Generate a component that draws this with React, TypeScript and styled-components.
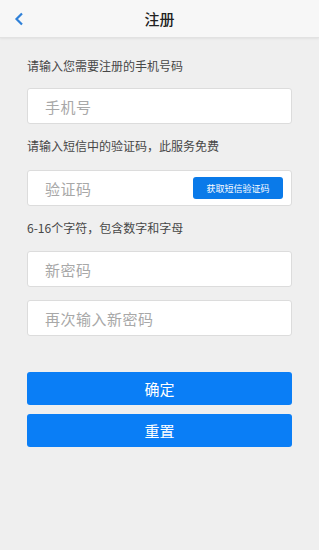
import styled, { createGlobalStyle } from 'styled-components'

const GlobalStyle = createGlobalStyle`
  html, body {
    margin: 0;
    padding: 0;
    background: #efefef;
    font-family: "Noto Sans CJK SC", "Noto Sans", sans-serif;
  }
`

const Page = styled.div`
  width: 319px;
  min-height: 550px;
  background: #efefef;
`

const Header = styled.header`
  position: relative;
  height: 37px;
  display: flex;
  align-items: center;
  justify-content: center;
  background: #f7f7f7;
  border-bottom: 1px solid #e2e2e2;
  box-shadow: 0 1px 2px rgba(0, 0, 0, 0.06);
`

const BackButton = styled.button`
  position: absolute;
  left: 10px;
  top: 9px;
  width: 18px;
  height: 20px;
  padding: 0;
  border: none;
  background: none;
  display: flex;
  align-items: center;
  justify-content: center;
`

const Title = styled.h1`
  margin: 0;
  font-size: 15px;
  font-weight: 500;
  color: #222;
`

const Form = styled.form`
  display: flex;
  flex-direction: column;
  padding: 0 27px;
`

const Label = styled.p<{ $top: number }>`
  margin: ${(p) => p.$top}px 0 0;
  font-size: 12px;
  line-height: 16px;
  color: #474747;
`

const Field = styled.div<{ $top: number }>`
  margin-top: ${(p) => p.$top}px;
  height: 34px;
  display: flex;
  align-items: center;
  background: #fff;
  border: 1px solid #dcdcdc;
  border-radius: 3px;
  padding: 0 8px 0 15px;
`

const Input = styled.input`
  flex: 1;
  min-width: 0;
  border: none;
  outline: none;
  background: transparent;
  font-family: inherit;
  font-size: 15px;
  letter-spacing: 0.5px;
  color: #333;
  &::placeholder {
    color: #a8a8a8;
  }
`

const CodeButton = styled.button`
  width: 90px;
  height: 22px;
  border: none;
  border-radius: 3px;
  background: #0a7ae9;
  color: #fff;
  font-family: inherit;
  font-size: 9px;
  padding: 0;
`

const Submit = styled.button<{ $top: number }>`
  margin-top: ${(p) => p.$top}px;
  height: 33px;
  border: none;
  border-radius: 3px;
  background: #0a7ef6;
  color: #fff;
  font-family: inherit;
  font-size: 15px;
`

export default function App() {
  return (
    <Page>
      <GlobalStyle />
      <Header>
        <BackButton type="button" aria-label="返回">
          <svg width="10" height="14" viewBox="0 0 10 14">
            <path d="M8 1.5 L2.5 7 L8 12.5" fill="none" stroke="#2f80d8" strokeWidth="2.2" />
          </svg>
        </BackButton>
        <Title>注册</Title>
      </Header>
      <Form onSubmit={(e) => e.preventDefault()}>
        <Label $top={20}>请输入您需要注册的手机号码</Label>
        <Field $top={14}>
          <Input placeholder="手机号" />
        </Field>
        <Label $top={14}>请输入短信中的验证码，此服务免费</Label>
        <Field $top={16}>
          <Input placeholder="验证码" />
          <CodeButton type="button">获取短信验证码</CodeButton>
        </Field>
        <Label $top={14}>6-16个字符，包含数字和字母</Label>
        <Field $top={15}>
          <Input type="password" placeholder="新密码" />
        </Field>
        <Field $top={13}>
          <Input type="password" placeholder="再次输入新密码" />
        </Field>
        <Submit type="submit" $top={36}>确定</Submit>
        <Submit type="button" $top={9}>重置</Submit>
      </Form>
    </Page>
  )
}
